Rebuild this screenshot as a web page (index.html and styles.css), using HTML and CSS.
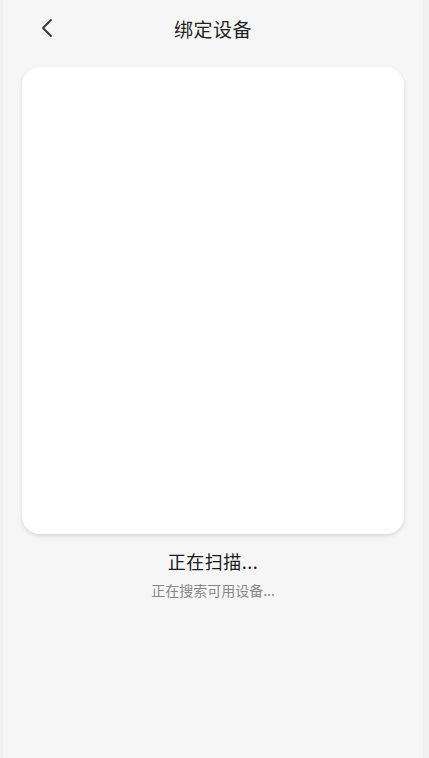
FILE: index.html
```html
<!DOCTYPE html>
<html lang="zh">
<head>
<meta charset="utf-8">
<link rel="stylesheet" href="styles.css">
</head>
<body>
<div class="page">
  <header class="nav">
    <span class="back">
      <svg width="14" height="20" viewBox="0 0 14 20"><path d="M11 2 L3 10 L11 18" fill="none" stroke="#333" stroke-width="1.8" stroke-linecap="round" stroke-linejoin="round"/></svg>
    </span>
    <h1 class="title">绑定设备</h1>
  </header>
  <main class="content">
    <div class="card"></div>
    <div class="status">正在扫描...</div>
    <div class="sub">正在搜索可用设备...</div>
  </main>
</div>
</body>
</html>
```
FILE: styles.css
```css
html, body {
  margin: 0;
  padding: 0;
  background: #f1f1f1;
  font-family: "Noto Sans CJK SC", "Noto Sans", sans-serif;
}
.page {
  margin-left: 3px;
  width: 420px;
  height: 758px;
  background: #f6f6f6;
}
.nav {
  position: relative;
  height: 58px;
  display: flex;
  align-items: flex-start;
  justify-content: center;
}
.back {
  position: absolute;
  left: 37px;
  top: 18px;
  display: flex;
}
.title {
  margin: 0;
  padding-top: 15px;
  font-size: 19px;
  line-height: 28px;
  font-weight: 400;
  color: #222;
  letter-spacing: 0.5px;
}
.content {
  display: flex;
  flex-direction: column;
  align-items: center;
  padding-top: 9px;
}
.card {
  width: 382px;
  height: 467px;
  background: #fff;
  border-radius: 18px;
  box-shadow: 0 2px 4px rgba(0,0,0,0.12);
}
.status {
  margin-top: 14px;
  font-size: 18px;
  font-weight: 400;
  color: #1a1a1a;
  line-height: 26px;
  letter-spacing: 0.5px;
}
.sub {
  margin-top: 5px;
  font-size: 14px;
  color: #888;
  line-height: 22px;
}
```
